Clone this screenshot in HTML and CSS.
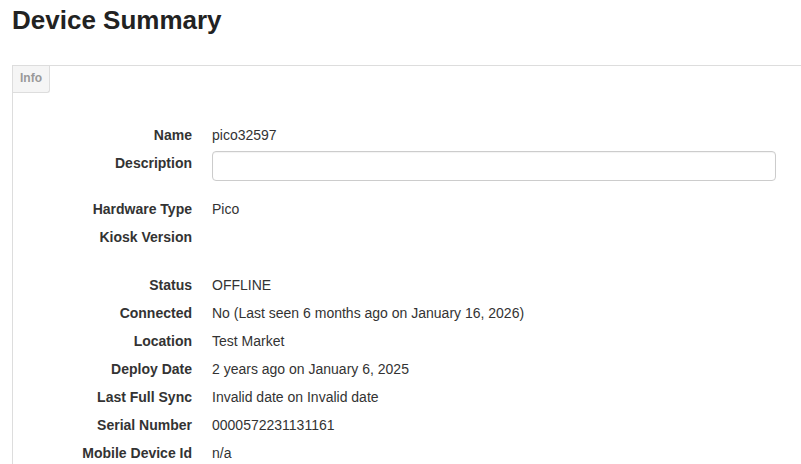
FILE: index.html
```html
<!doctype html>
<html lang="en">
<head>
	<meta charset="UTF-8">
	<title>Device Summary</title>
	<link rel="stylesheet" href="styles.css">
</head>
<body>
	<h1 class="title">Device Summary</h1>
	<div class="panel">
		<div class="tab">Info</div>
		<div class="fields">
			<div class="row">
				<div class="label">Name</div>
				<div class="value">pico32597</div>
			</div>
			<div class="row row-input">
				<label class="label" for="description">Description</label>
				<div class="value"><input type="text" id="description" class="text-input"></div>
			</div>
			<div class="row">
				<div class="label">Hardware Type</div>
				<div class="value">Pico</div>
			</div>
			<div class="row">
				<div class="label">Kiosk Version</div>
				<div class="value"></div>
			</div>

			<div class="row group-start">
				<div class="label">Status</div>
				<div class="value">OFFLINE</div>
			</div>
			<div class="row">
				<div class="label">Connected</div>
				<div class="value">No (Last seen 6 months ago on January 16, 2026)</div>
			</div>
			<div class="row">
				<div class="label">Location</div>
				<div class="value">Test Market</div>
			</div>
			<div class="row">
				<div class="label">Deploy Date</div>
				<div class="value">2 years ago on January 6, 2025</div>
			</div>
			<div class="row">
				<div class="label">Last Full Sync</div>
				<div class="value">Invalid date on Invalid date</div>
			</div>
			<div class="row">
				<div class="label">Serial Number</div>
				<div class="value">0000572231131161</div>
			</div>
			<div class="row">
				<div class="label">Mobile Device Id</div>
				<div class="value">n/a</div>
			</div>
		</div>
	</div>
</body>
</html>
```

FILE: styles.css
```css
body{
	margin: 0;
	padding: 0 0 0 12px;
	overflow: hidden;
	font-family: "Liberation Sans", Arial, sans-serif;
	font-size: 14px;
	color: #333;
	background: #fff;
}
.title{
	margin: 5px 0 0;
	font-size: 26px;
	line-height: 30px;
	font-weight: bold;
	color: #222;
}
.panel{
	margin: 30px -1px 0 0;
	border-top: 1px solid #ddd;
	border-left: 1px solid #ddd;
	min-height: 420px;
}
.tab{
	display: inline-block;
	padding: 0 7px;
	height: 27px;
	line-height: 25px;
	box-sizing: border-box;
	font-size: 12px;
	font-weight: bold;
	color: #999;
	background: #f5f5f5;
	border-right: 1px solid #ddd;
	border-bottom: 1px solid #ddd;
	border-bottom-right-radius: 3px;
}
.fields{
	margin-top: 28px;
	padding-right: 26px;
}
.row{
	display: grid;
	grid-template-columns: 179px 1fr;
	column-gap: 20px;
	line-height: 28px;
	min-height: 28px;
}
.row-input{
	height: 46px;
}
.group-start{
	margin-top: 20px;
}
.label{
	text-align: right;
	font-weight: bold;
	color: #333;
}
.text-input{
	display: block;
	width: 100%;
	height: 30px;
	margin-top: 2px;
	padding: 4px 10px;
	box-sizing: border-box;
	border: 1px solid #ccc;
	border-radius: 4px;
	box-shadow: inset 0 1px 1px rgba(0,0,0,.05);
	font: inherit;
	color: #333;
	outline: none;
}
```
